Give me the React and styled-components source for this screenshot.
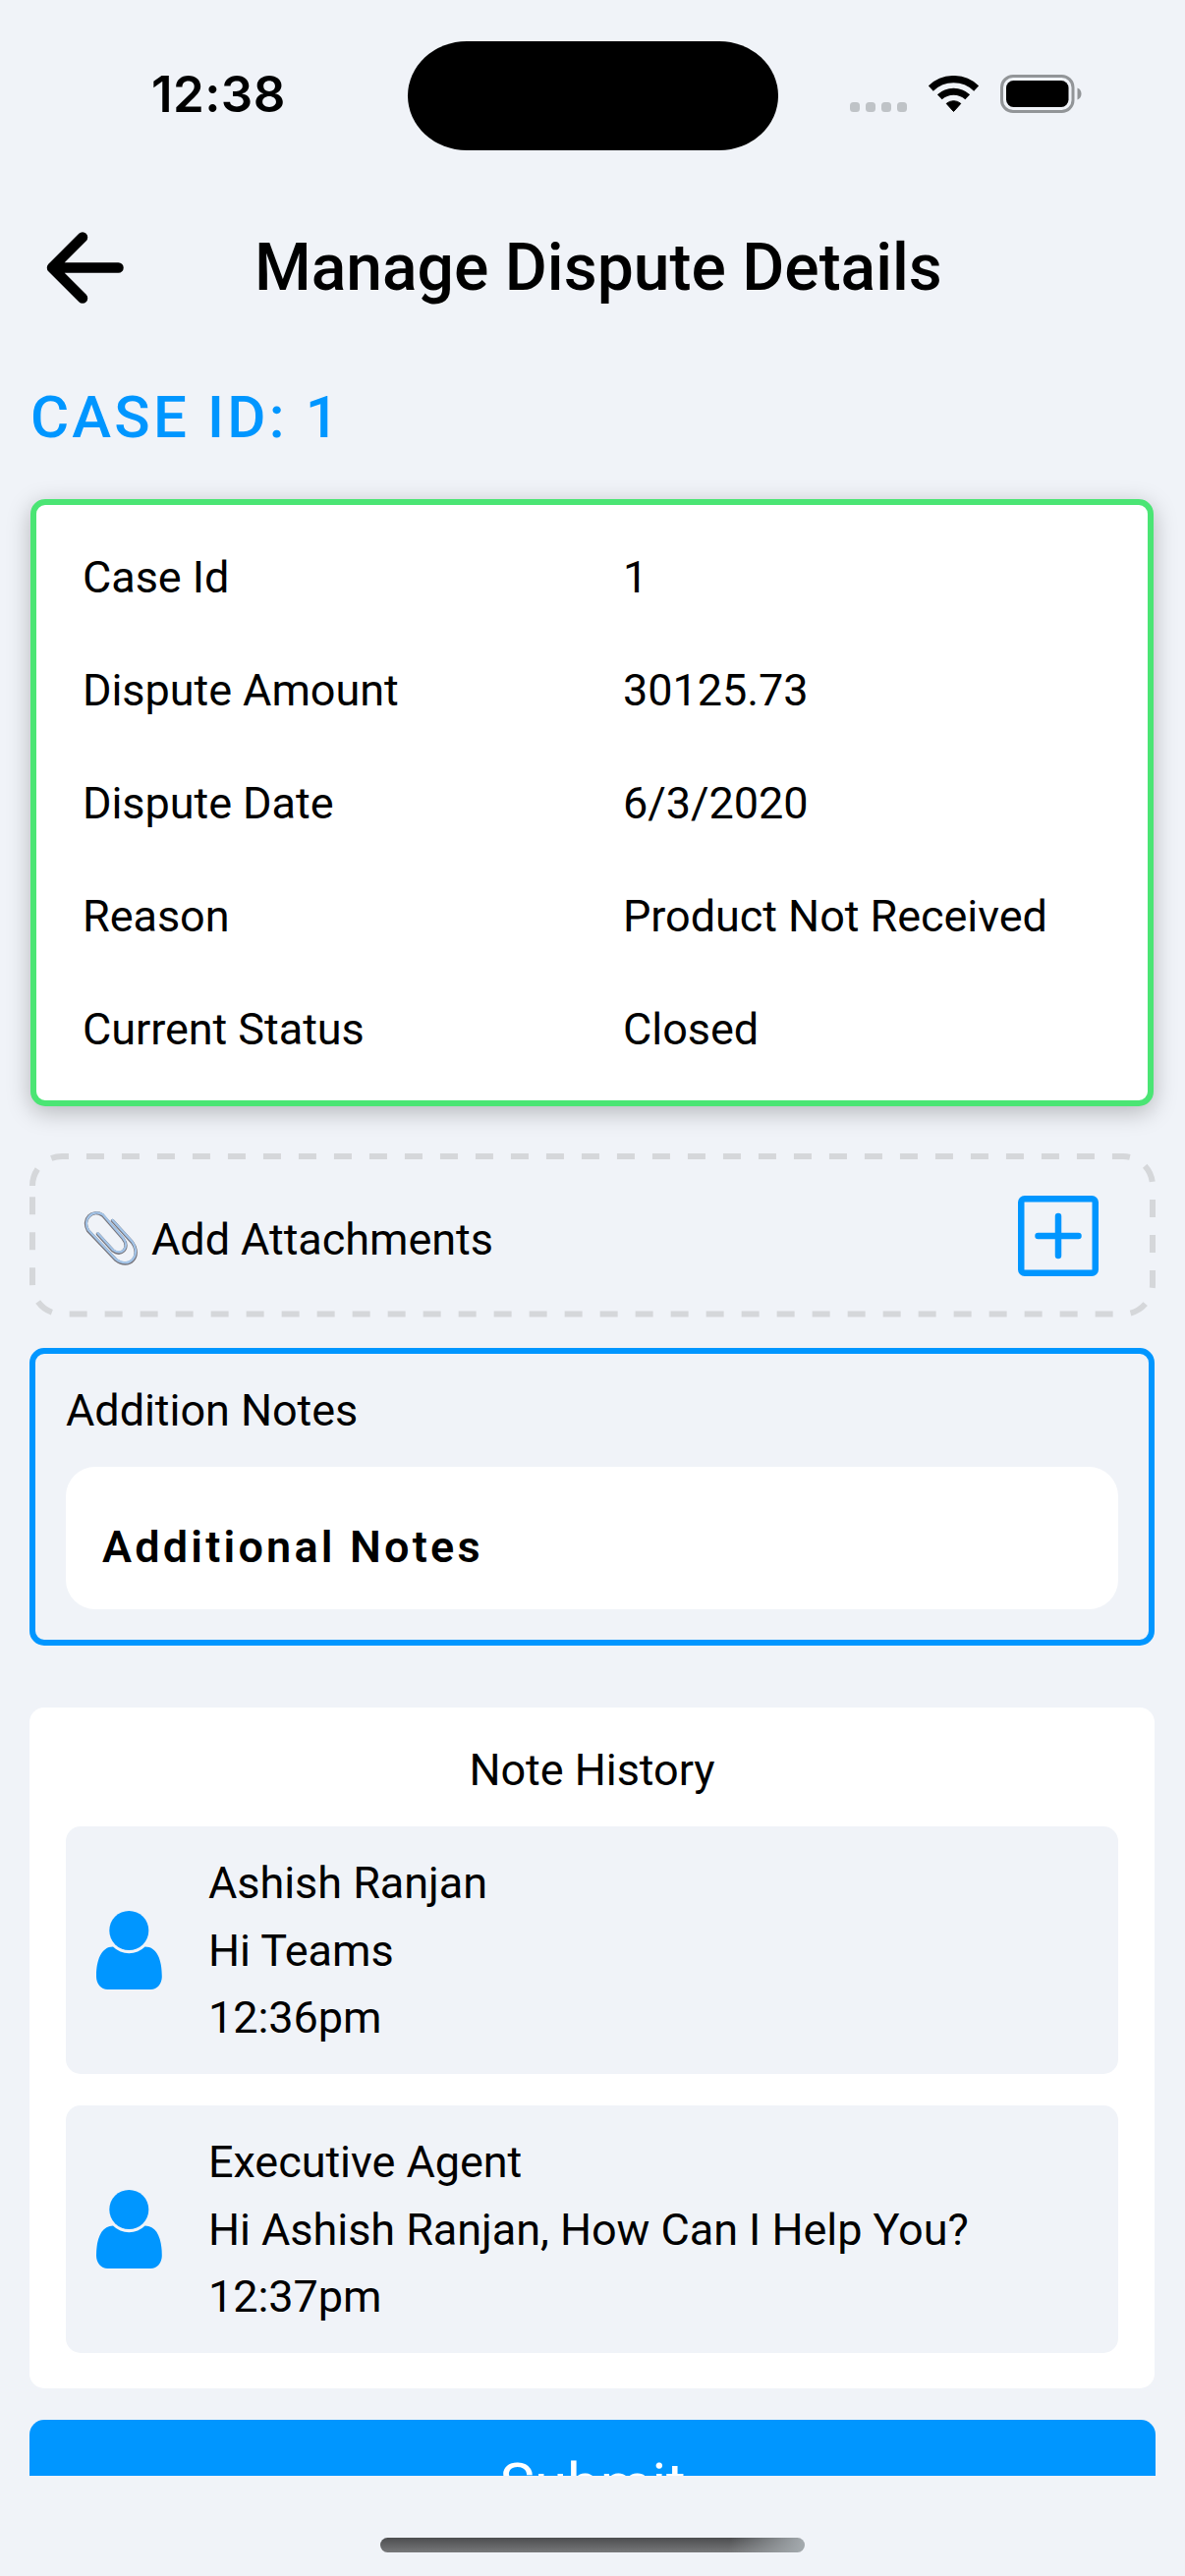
import React from "react";
import styled, { createGlobalStyle } from "styled-components";

const blue = "#0096ff";
const page = "#f0f3f8";

const GlobalStyle = createGlobalStyle`
  * { box-sizing: border-box; }
  body { margin: 0; background: ${page}; }
`;

const Screen = styled.div`
  width: 1206px;
  height: 2622px;
  display: flex;
  flex-direction: column;
  overflow: hidden;
  background: ${page};
  color: #000;
  font-family: Roboto, "Liberation Sans", sans-serif;
  font-size: 45px;
  letter-spacing: -0.05px;
`;

const StatusBar = styled.div`
  height: 194px;
  flex: none;
  display: grid;
  grid-template-columns: 415px 376.5px 1fr;
  align-items: start;
`;

const Time = styled.div`
  padding: 66px 0 0 154px;
  font-family: Inter, sans-serif;
  font-size: 51px;
  font-weight: 600;
  line-height: 60px;
  letter-spacing: 0.4px;
`;

const Island = styled.div`
  height: 111px;
  margin-top: 41.5px;
  border-radius: 60px / 55.5px;
  background: #000;
`;

const StatusIcons = styled.div`
  display: flex;
  align-items: flex-start;
  padding: 76px 0 0 73.5px;
`;

const Signal = styled.div`
  display: flex;
  gap: 6px;
  padding-top: 28px;
  margin-right: 22px;
`;

const Dot = styled.span`
  width: 10px;
  height: 10px;
  border-radius: 3.5px;
  background: #bfc3c7;
`;

const WifiSvg = styled.svg`
  display: block;
  margin: 1px 22px 0 0;
`;

const Header = styled.header`
  height: 157px;
  flex: none;
  display: flex;
  align-items: center;
  padding-left: 47px;
`;

const Title = styled.h1`
  margin: 0 0 0 133px;
  font-size: 66px;
  line-height: 78px;
  font-weight: 500;
  white-space: nowrap;
  letter-spacing: 0;
`;

const Scroll = styled.main`
  height: 2169px;
  flex: none;
  overflow: hidden;
  padding: 0 31px 0 30px;
  display: flex;
  flex-direction: column;
`;

const CaseHeading = styled.h2`
  flex: none;
  height: 157px;
  margin: 0;
  padding-left: 1px;
  font-size: 60px;
  line-height: 148px;
  font-weight: 500;
  letter-spacing: 3.2px;
  color: ${blue};
`;

const Card = styled.section`
  flex: none;
  height: 618px;
  margin: 0 1px;
  padding: 16px 47px;
  border: 6px solid #4be574;
  border-radius: 15px;
  background: #fff;
  box-shadow: 0 6px 23px rgba(0, 0, 0, 0.25);
`;

const Row = styled.div`
  display: grid;
  grid-template-columns: 550px 1fr;
  line-height: 115px;
  white-space: nowrap;
`;

const Attachments = styled.section`
  position: relative;
  flex: none;
  height: 167px;
  margin-top: 48px;
  padding: 0 57px 0 55px;
  display: flex;
  align-items: center;
`;

const DashedEdge = styled.svg`
  position: absolute;
  top: 0;
  left: 0;
`;

const ClipSvg = styled.svg`
  margin-top: 6px;
`;

const AttachLabel = styled.span`
  flex: 1;
  padding-top: 8px;
  margin-left: 13px;
  line-height: 60px;
`;

const NotesBox = styled.section`
  flex: none;
  height: 303px;
  margin-top: 31px;
  padding: 28px 31px 0;
  border: 6px solid ${blue};
  border-radius: 15px;
`;

const NotesLabel = styled.div`
  line-height: 60px;
`;

const NotesInput = styled.div`
  height: 144.5px;
  margin-top: 27px;
  padding: 52px 37px 0;
  border-radius: 30px;
  background: #fff;
  font-weight: 600;
  letter-spacing: 3.2px;
  line-height: 60px;
`;

const History = styled.section`
  flex: none;
  height: 693px;
  margin-top: 63px;
  padding: 34px 37px 0;
  border-radius: 15px;
  background: #fff;
`;

const HistoryTitle = styled.div`
  line-height: 60px;
  margin-bottom: 27px;
  text-align: center;
`;

const Note = styled.article`
  height: 252px;
  margin-bottom: 32px;
  padding-left: 31px;
  display: flex;
  align-items: center;
  gap: 47px;
  border-radius: 15px;
  background: ${page};
`;

const NoteText = styled.div`
  padding-top: 1.5px;
  line-height: 68.5px;
  white-space: nowrap;
`;

const Submit = styled.button`
  flex: none;
  height: 132px;
  margin: 32px -1px 0 0;
  border: 0;
  border-radius: 15px;
  background: ${blue};
  color: #fff;
  font: 400 60px/70px Roboto, sans-serif;
`;

const HomeArea = styled.footer`
  height: 102px;
  padding-top: 63px;
  display: flex;
  justify-content: center;
  align-items: flex-start;
`;

const HomeIndicator = styled.div`
  width: 432px;
  height: 15px;
  border-radius: 7.5px;
  background: linear-gradient(100deg, rgba(162, 168, 172, 0) 82%, #a2a8ac 99%),
    linear-gradient(#4c4d4f, #77787a);
`;

const details = [
  ["Case Id", "1"],
  ["Dispute Amount", "30125.73"],
  ["Dispute Date", "6/3/2020"],
  ["Reason", "Product Not Received"],
  ["Current Status", "Closed"],
];

const notes = [
  { name: "Ashish Ranjan", text: "Hi Teams", time: "12:36pm" },
  { name: "Executive Agent", text: "Hi Ashish Ranjan, How Can I Help You?", time: "12:37pm" },
];

const Wifi = () => (
  <WifiSvg width="51" height="38" viewBox="0 0 51 38" fill="none" stroke="#000">
    <path d="M2.300 13A33.400 33.400 0 0 1 48.700 13" strokeWidth="7.300" />
    <path d="M11.300 21.800A20.800 20.800 0 0 1 39.700 21.800" strokeWidth="7" />
    <path d="M18.200 28.400A11.200 11.200 0 0 1 32.800 28.400L25.500 36.500z" fill="#000" strokeWidth="1" strokeLinejoin="round" />
  </WifiSvg>
);

const Battery = () => (
  <svg width="84" height="39" viewBox="0 0 84 39">
    <rect x="1.5" y="1.5" width="72.5" height="36" rx="11.5" fill="none" stroke="#929598" strokeWidth="3" />
    <rect x="6" y="6" width="63.5" height="27" rx="7.5" />
    <path d="M78.5 13.5c2.6 1 4 3.2 4 6s-1.4 5-4 6z" fill="#929598" />
  </svg>
);

const BackArrow = () => (
  <svg width="79" height="74" viewBox="0 0 79 74" fill="none" stroke="#000" strokeWidth="10.5" strokeLinecap="round" strokeLinejoin="round">
    <path d="M73.5 36.500H6M37 5.500L6 36.500l31 31" />
  </svg>
);

const Paperclip = () => (
  <ClipSvg width="56" height="58" viewBox="0 0 56 58" fill="none" strokeLinecap="round" strokeLinejoin="round">
    <path d="M29.500 10.500L49.500 32.500C60 47 46 61 33 50.500L4.500 20.500C-2 9 9 -2 19.500 5L40 28.500c8 10-2 19-10 12.500L14.500 24" stroke="#77757c" strokeWidth="3.4" />
    <path d="M29.500 9.700L49.500 31.700C59.500 46 46 60 33 49.700L4.700 19.700C-1 9 9 -2 19.700 4.300L40 27.700c8 10-2 19-10 12.500L14.500 23.200" stroke="#a3c4e8" strokeWidth="2.200" />
  </ClipSvg>
);

const PlusBox = () => (
  <svg width="82" height="82" viewBox="0 0 82 82" fill="none" stroke={blue} strokeWidth="6.5" strokeLinecap="round">
    <rect x="3.250" y="3.250" width="75.5" height="75.5" rx="3.5" />
    <path d="M41 21v40M20.5 41h41" />
  </svg>
);

const Person = () => (
  <svg width="67" height="80" viewBox="0 0 67 80" fill={blue}>
    <circle cx="33.3" cy="20" r="20" />
    <path d="M17 36.500A23.200 23.200 0 0 0 49.600 36.500C62 36.500 66.800 50 66.800 67C66.800 74 62 80 55.500 80H11.500C5 80 0 74 0 67C0 50 5 36.500 17 36.500z" />
  </svg>
);

export default function App() {
  return (
    <Screen>
      <GlobalStyle />
      <StatusBar>
        <Time>12:38</Time>
        <Island />
        <StatusIcons>
          <Signal>
            <Dot />
            <Dot />
            <Dot />
            <Dot />
          </Signal>
          <Wifi />
          <Battery />
        </StatusIcons>
      </StatusBar>
      <Header>
        <BackArrow />
        <Title>Manage Dispute Details</Title>
      </Header>
      <Scroll>
        <CaseHeading>CASE ID: 1</CaseHeading>
        <Card>
          {details.map(([label, value]) => (
            <Row key={label}>
              <span>{label}</span>
              <span>{value}</span>
            </Row>
          ))}
        </Card>
        <Attachments>
          <DashedEdge width="1146" height="167" fill="none" stroke="#d5d7da" strokeWidth="6" strokeDasharray="18 18">
            <path d="M3 33a30 30 0 0 1 30-30H1113a30 30 0 0 1 30 30V133.500a30 30 0 0 1-30 30H33a30 30 0 0 1-30-30z" />
          </DashedEdge>
          <Paperclip />
          <AttachLabel>Add Attachments</AttachLabel>
          <PlusBox />
        </Attachments>
        <NotesBox>
          <NotesLabel>Addition Notes</NotesLabel>
          <NotesInput>Additional Notes</NotesInput>
        </NotesBox>
        <History>
          <HistoryTitle>Note History</HistoryTitle>
          {notes.map((n) => (
            <Note key={n.name}>
              <Person />
              <NoteText>
                <div>{n.name}</div>
                <div>{n.text}</div>
                <div>{n.time}</div>
              </NoteText>
            </Note>
          ))}
        </History>
        <Submit>Submit</Submit>
      </Scroll>
      <HomeArea>
        <HomeIndicator />
      </HomeArea>
    </Screen>
  );
}
